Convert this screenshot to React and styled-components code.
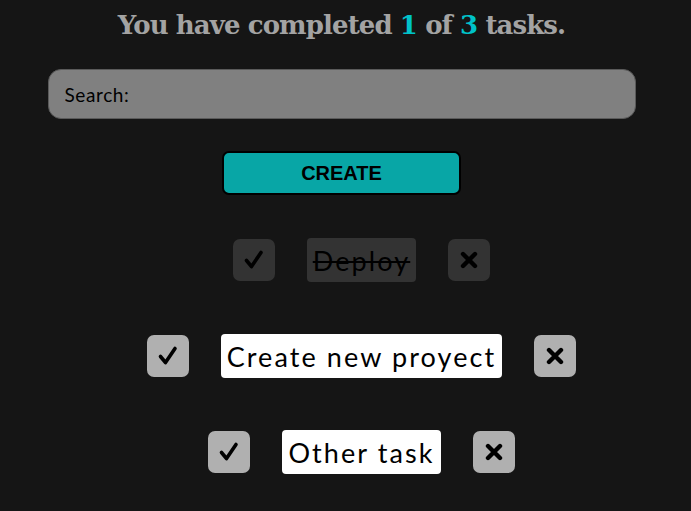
import React from "react";
import styled, { createGlobalStyle } from "styled-components";

const Global = createGlobalStyle`
  html, body { margin: 0; padding: 0; background: #151515; }
  body { font-family: "Open Sans", sans-serif; }
`;

const Page = styled.div`
  width: 683px;
  display: flex;
  flex-direction: column;
  align-items: center;
`;

const Title = styled.h1`
  margin: 7px 0 0;
  font-family: "DejaVu Serif", serif;
  font-weight: bold;
  font-size: 26px;
  line-height: 36px;
  color: #a3a3a3;
  letter-spacing: -0.9px;
`;

const Num = styled.span`
  color: #00c2c8;
`;

const Search = styled.input`
  box-sizing: border-box;
  margin-top: 26px;
  width: 588px;
  height: 50px;
  border-radius: 13px;
  border: 1px solid #5a5a5a;
  background: #808080;
  padding: 0 16px;
  font-family: "Lato", sans-serif;
  font-size: 19px;
  letter-spacing: 0.6px;
  color: #000;
  outline: none;
  &::placeholder { color: #000; }
`;

const CreateButton = styled.button`
  box-sizing: border-box;
  margin-top: 32px;
  width: 239px;
  height: 44px;
  border-radius: 7px;
  border: 2px solid #000;
  background: #08a6a6;
  font-family: "Liberation Sans", Arial, sans-serif;
  font-weight: bold;
  font-size: 20px;
  color: #000;
`;

const List = styled.ul`
  list-style: none;
  margin: 43px 0 0;
  padding: 0 0 0 40px;
  display: flex;
  flex-direction: column;
  gap: 52px;
`;

const Item = styled.li`
  display: flex;
  align-items: center;
  justify-content: center;
  gap: 32px;
  height: 44px;
`;

const IconButton = styled.button`
  box-sizing: border-box;
  width: 42px;
  height: 42px;
  border: none;
  border-radius: 7px;
  padding: 0;
  display: flex;
  align-items: center;
  justify-content: center;
  background: ${(p) => (p.$done ? "#333333" : "#b0b0b0")};
`;

const TaskText = styled.p`
  margin: 0;
  height: 44px;
  box-sizing: border-box;
  padding: 0 6px;
  display: flex;
  align-items: center;
  border-radius: 4px;
  font-family: "Lato", sans-serif;
  font-size: 27px;
  letter-spacing: 2.1px;
  color: #000;
  background: ${(p) => (p.$done ? "#333333" : "#ffffff")};
  text-decoration: ${(p) => (p.$done ? "line-through" : "none")};
`;

const CheckIcon = () => (
  <svg width="22" height="22" viewBox="0 0 22 22">
    <path d="M3.5 11.5 L8.5 17.5 L18 3.5" fill="none" stroke="#000" strokeWidth="3.6" strokeLinecap="round" strokeLinejoin="round" />
  </svg>
);

const XIcon = () => (
  <svg width="18" height="18" viewBox="0 0 18 18">
    <path d="M3 3 L15 15 M15 3 L3 15" fill="none" stroke="#000" strokeWidth="4.4" strokeLinecap="round" />
  </svg>
);

const tasks = [
  { text: "Deploy", done: true },
  { text: "Create new proyect", done: false },
  { text: "Other task", done: false },
];

export default function App() {
  return (
    <Page>
      <Global />
      <Title>
        You have completed <Num>1</Num> of <Num>3</Num> tasks.
      </Title>
      <Search placeholder="Search:" />
      <CreateButton>CREATE</CreateButton>
      <List>
        {tasks.map((t) => (
          <Item key={t.text}>
            <IconButton $done={t.done}><CheckIcon /></IconButton>
            <TaskText $done={t.done}>{t.text}</TaskText>
            <IconButton $done={t.done}><XIcon /></IconButton>
          </Item>
        ))}
      </List>
    </Page>
  );
}
